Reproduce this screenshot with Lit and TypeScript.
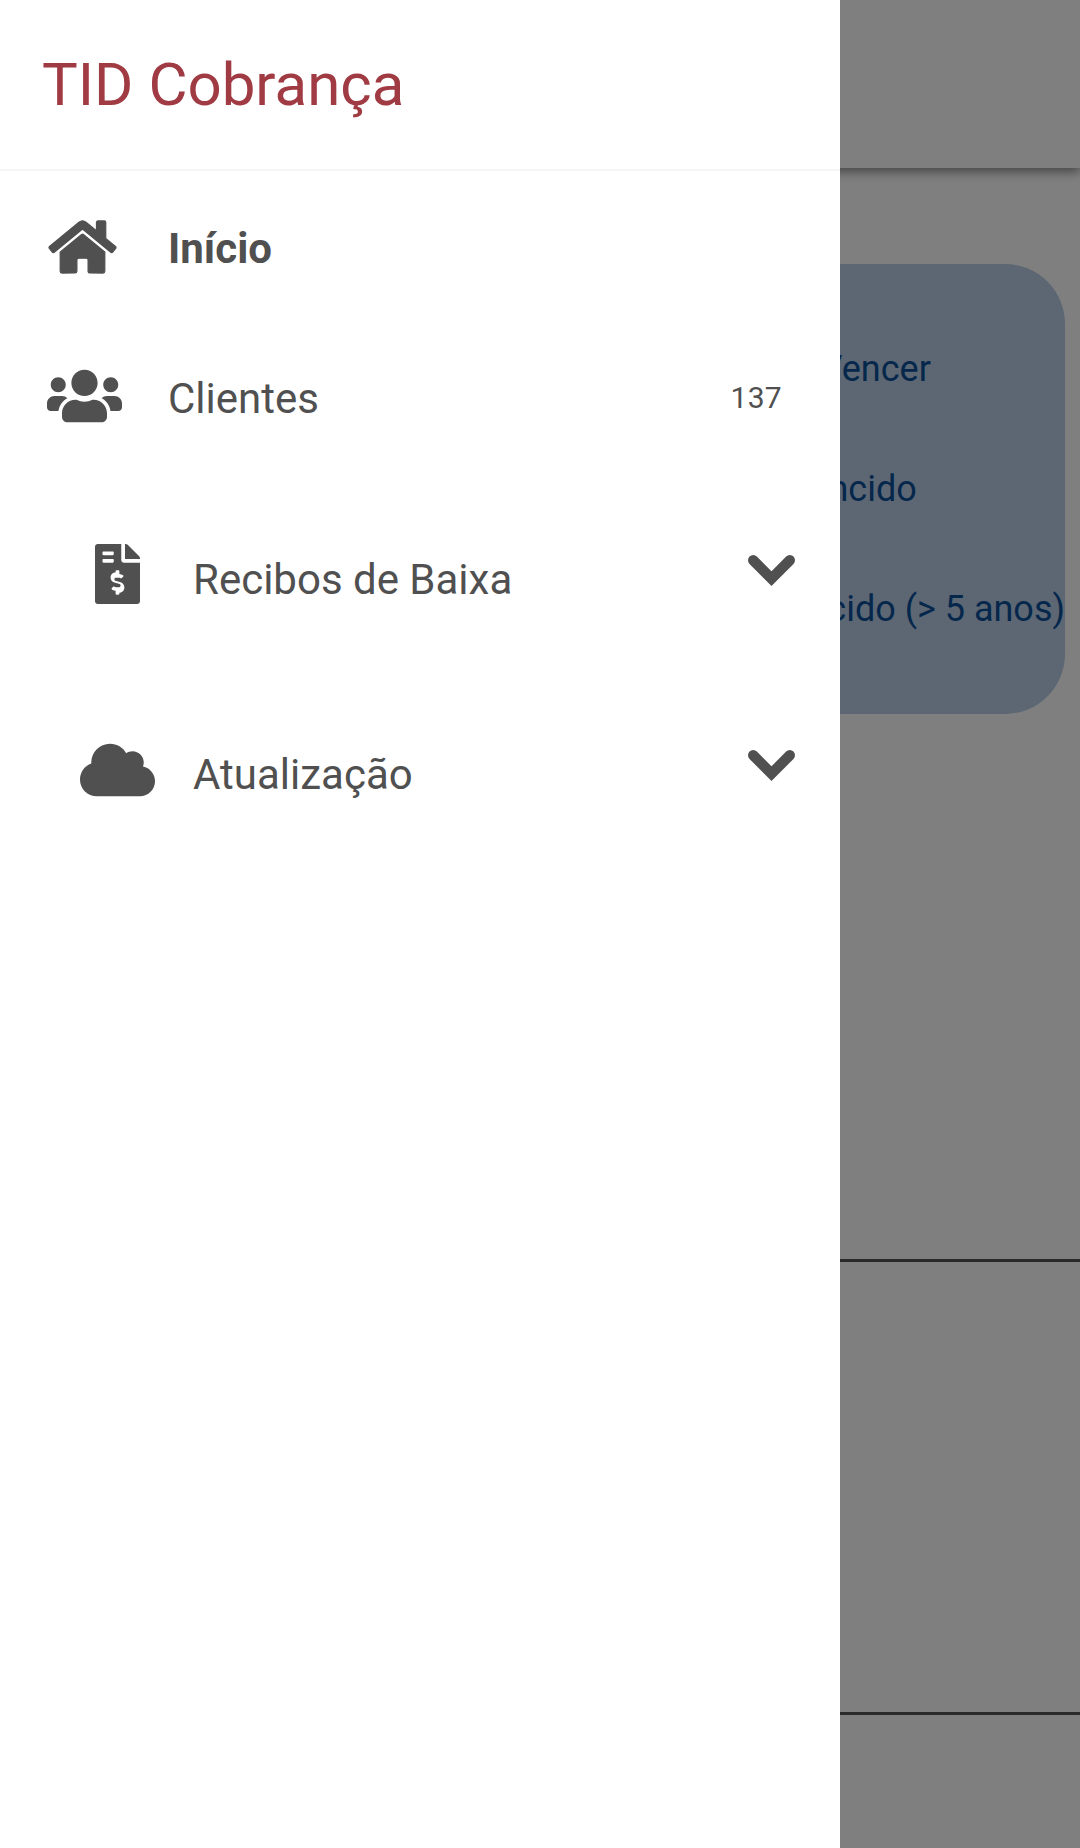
import { LitElement, html, css, svg } from "lit";
import { customElement } from "lit/decorators.js";

const ICONS = {
  home: { w: 576, d: "M280.37 148.26L96 300.11V464a16 16 0 0 0 16 16l112.06-.29a16 16 0 0 0 15.92-16V368a16 16 0 0 1 16-16h64a16 16 0 0 1 16 16v95.64a16 16 0 0 0 16 16.05L464 480a16 16 0 0 0 16-16V300L295.67 148.26a12.19 12.19 0 0 0-15.3 0zM571.6 251.47L488 182.56V44.05a12 12 0 0 0-12-12h-56a12 12 0 0 0-12 12v72.61L318.47 43a48 48 0 0 0-61 0L4.34 251.47a12 12 0 0 0-1.6 16.9l25.5 31A12 12 0 0 0 45.15 301l235.22-193.74a12.19 12.19 0 0 1 15.3 0L530.9 301a12 12 0 0 0 16.9-1.6l25.5-31a12 12 0 0 0-1.7-16.93z" },
  users: { w: 640, d: "M96 224c35.3 0 64-28.7 64-64s-28.7-64-64-64-64 28.7-64 64 28.7 64 64 64zm448 0c35.3 0 64-28.7 64-64s-28.7-64-64-64-64 28.7-64 64 28.7 64 64 64zm32 32h-64c-17.6 0-33.5 7.1-45.1 18.6 40.3 22.1 68.9 62 75.1 109.4h66c17.7 0 32-14.3 32-32v-32c0-35.3-28.7-64-64-64zm-256 0c61.9 0 112-50.1 112-112S381.9 32 320 32 208 82.1 208 144s50.1 112 112 112zm76.8 32h-8.3c-20.8 10-43.9 16-68.5 16s-47.6-6-68.5-16h-8.3C179.6 288 128 339.6 128 403.2V432c0 26.5 21.5 48 48 48h288c26.5 0 48-21.5 48-48v-28.8c0-63.6-51.6-115.2-115.2-115.2zm-223.7-13.4C161.5 263.1 145.6 256 128 256H64c-35.3 0-64 28.7-64 64v32c0 17.7 14.3 32 32 32h65.9c6.3-47.4 34.9-87.3 75.2-109.4z" },
  invoice: { w: 384, d: "M377 105L279.1 7c-4.5-4.5-10.6-7-17-7H256v128h128v-6.1c0-6.3-2.5-12.4-7-16.9zm-153 31V0H24C10.7 0 0 10.7 0 24v464c0 13.3 10.7 24 24 24h336c13.3 0 24-10.7 24-24V160H248c-13.2 0-24-10.8-24-24zM64 72c0-4.42 3.58-8 8-8h80c4.42 0 8 3.58 8 8v16c0 4.42-3.58 8-8 8H72c-4.42 0-8-3.58-8-8V72zm0 64c0-4.42 3.58-8 8-8h80c4.42 0 8 3.58 8 8v16c0 4.42-3.58 8-8 8H72c-4.42 0-8-3.58-8-8v-16zm144 263.88V424c0 4.42-3.58 8-8 8h-16c-4.42 0-8-3.58-8-8v-24.29c-11.29-.58-22.27-4.52-31.37-11.35-3.9-2.93-4.1-8.77-.57-12.14l11.75-11.21c2.77-2.64 6.89-2.76 10.13-.73 3.87 2.42 8.26 3.72 12.82 3.72h28.11c6.5 0 11.8-5.92 11.8-13.19 0-5.95-3.61-11.19-8.77-12.73l-45-13.5c-18.59-5.58-31.58-23.42-31.58-43.39 0-24.52 19.05-44.44 42.67-45.07V232c0-4.42 3.58-8 8-8h16c4.42 0 8 3.58 8 8v24.29c11.29.58 22.27 4.51 31.37 11.35 3.9 2.93 4.1 8.77.57 12.14l-11.75 11.21c-2.77 2.64-6.89 2.76-10.13.73-3.87-2.43-8.26-3.72-12.82-3.72h-28.11c-6.5 0-11.8 5.92-11.8 13.19 0 5.95 3.61 11.19 8.77 12.73l45 13.5c18.59 5.58 31.58 23.42 31.58 43.39 0 24.53-19.05 44.44-42.67 45.07z" },
  cloud: { w: 640, d: "M537.6 226.6c4.1-10.7 6.4-22.4 6.4-34.6 0-53-43-96-96-96-19.7 0-38.1 6-53.3 16.2C367 64.2 315.3 32 256 32c-88.4 0-160 71.6-160 160 0 2.7.1 5.4.2 8.1C40.2 219.8 0 273.2 0 336c0 79.5 64.5 144 144 144h368c70.7 0 128-57.3 128-128 0-61.9-44-113.6-102.4-125.4z" },
};

function icon(name: keyof typeof ICONS, cls: string) {
  const i = ICONS[name];
  return html`<svg class=${cls} viewBox="0 0 ${i.w} 512" fill="currentColor">${svg`<path d=${i.d}></path>`}</svg>`;
}

const chevron = html`<svg class="chev" viewBox="0 0 48 32" fill="none" stroke="currentColor" stroke-width="10.6" stroke-linecap="round" stroke-linejoin="miter">${svg`<path d="M5.3 5.3L24 24L42.7 5.3"></path>`}</svg>`;

@customElement("app-root")
export class AppRoot extends LitElement {
  static styles = css`
    :host {
      display: block;
      position: relative;
      width: 1080px;
      height: 1848px;
      overflow: hidden;
      font-family: Roboto, "Liberation Sans", sans-serif;
      background: #ffffff;
    }
    .bar {
      height: 168px;
      background: #ffffff;
      box-shadow: 0 4px 10px rgba(0, 0, 0, 0.45);
    }
    .card {
      box-sizing: border-box;
      width: 1065px;
      height: 450px;
      margin-top: 96px;
      padding-top: 80px;
      border-radius: 0 60px 60px 0;
      background: #b8cfe7;
      color: #0c4f99;
      font-size: 36px;
      display: flex;
      justify-content: flex-end;
    }
    .lines div {
      height: 120px;
      line-height: 50px;
      white-space: nowrap;
    }
    .lines .inset { padding-left: 21px; }
    .rule {
      height: 3px;
      background: #555555;
    }
    .rule.one { margin-top: 545px; }
    .rule.two { margin-top: 450px; }
    .scrim {
      position: absolute;
      inset: 0;
      background: rgba(0, 0, 0, 0.5);
    }
    .drawer {
      position: absolute;
      left: 0;
      top: 0;
      bottom: 0;
      width: 840px;
      background: #ffffff;
      color: #505050;
      display: flex;
      flex-direction: column;
    }
    .head {
      box-sizing: border-box;
      height: 171px;
      padding-left: 42px;
      border-bottom: 2px solid #f6f6f6;
      display: flex;
      align-items: center;
      color: #a03a43;
      font-size: 60px;
    }
    .list { padding-top: 1px; }
    .row {
      display: flex;
      align-items: center;
      font-size: 42px;
      padding-right: 45px;
    }
    .row.top { height: 150px; padding-left: 47px; }
    .row.top .label { margin-left: 46px; padding-top: 3px; }
    .row.sub { padding-left: 80px; }
    .row.sub .label { margin-left: 38px; }
    .row.r3 { height: 214px; }
    .row.r4 { height: 176px; }
    .cell { width: 75px; display: flex; justify-content: center; align-items: center; flex: none; }
    .cell.left { justify-content: flex-start; }
    .label { flex: 1; }
    .bold { font-weight: 700; }
    .ic { height: 60px; flex: none; }
    .home { width: 67px; margin-left: 2px; overflow: visible; }
    .home path { stroke: currentColor; stroke-width: 10; }
    .users { width: 75px; transform: translateY(-1px); }
    .invoice { width: 45px; transform: translateY(-5px); }
    .cloud { width: 75px; transform: translateY(-4px); }
    .chev { width: 47px; height: 31.5px; flex: none; transform: translateY(-8px); }
    .count { font-size: 30px; letter-spacing: 0.3px; padding-right: 13px; }
  `;

  render() {
    return html`
      <div class="bar"></div>
      <div class="card">
        <div class="lines">
          <div class="inset">A Vencer</div>
          <div class="inset">Vencido</div>
          <div>Vencido (&gt; 5 anos)</div>
        </div>
      </div>
      <div class="rule one"></div>
      <div class="rule two"></div>
      <div class="scrim"></div>
      <nav class="drawer">
        <div class="head">TID Cobrança</div>
        <div class="list">
          <div class="row top">
            <div class="cell left">${icon("home", "ic home")}</div>
            <span class="label bold">Início</span>
          </div>
          <div class="row top">
            <div class="cell left">${icon("users", "ic users")}</div>
            <span class="label">Clientes</span>
            <span class="count">137</span>
          </div>
          <div class="row sub r3">
            <div class="cell">${icon("invoice", "ic invoice")}</div>
            <span class="label">Recibos de Baixa</span>
            ${chevron}
          </div>
          <div class="row sub r4">
            <div class="cell">${icon("cloud", "ic cloud")}</div>
            <span class="label">Atualização</span>
            ${chevron}
          </div>
        </div>
      </nav>
    `;
  }
}
